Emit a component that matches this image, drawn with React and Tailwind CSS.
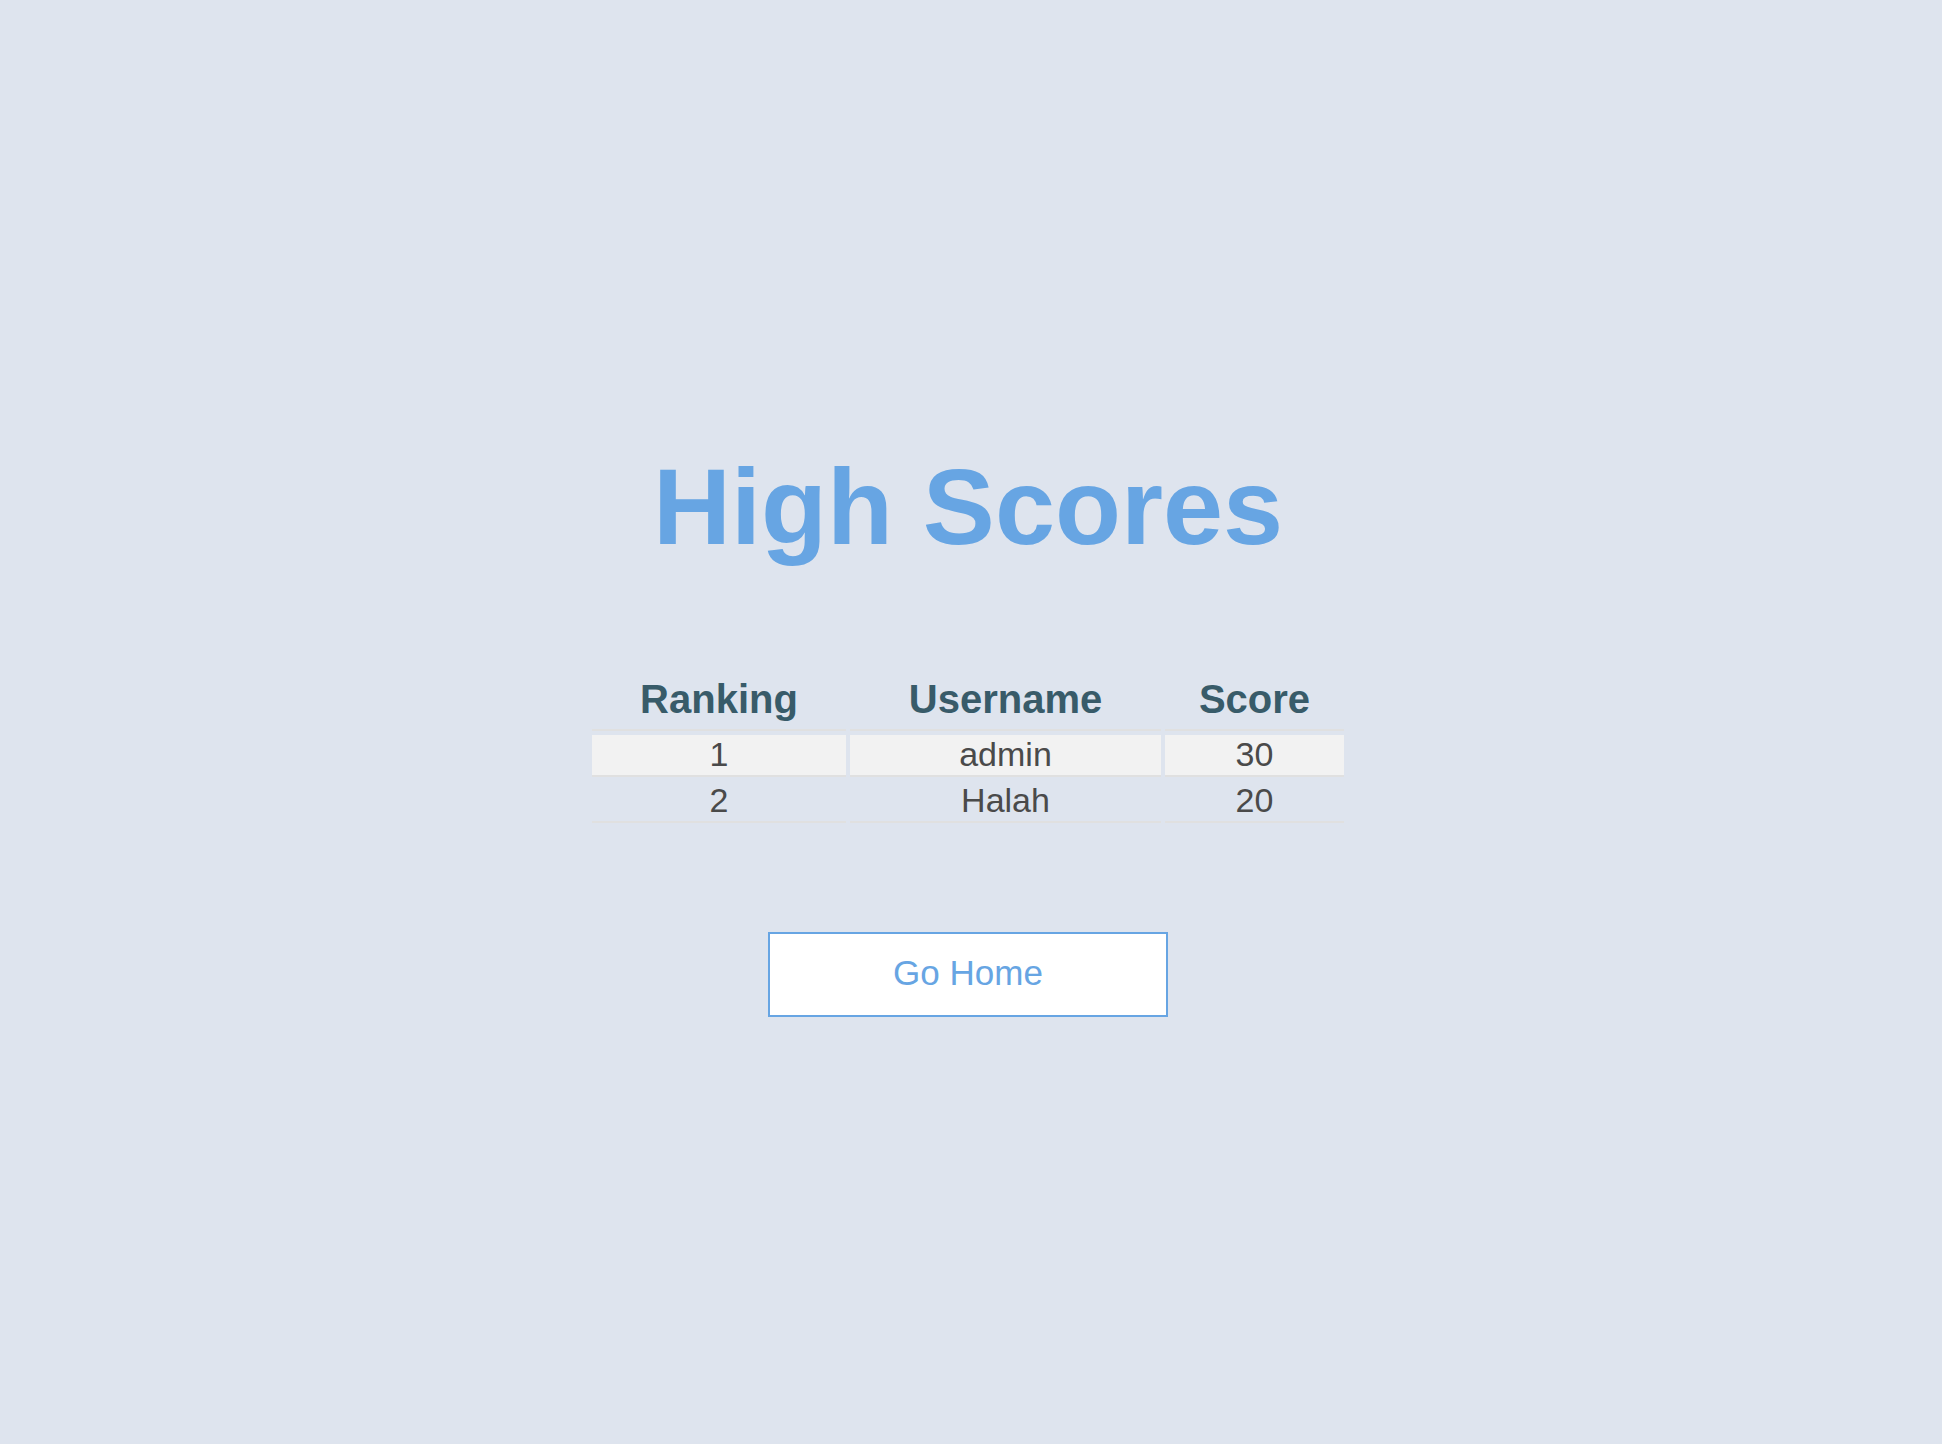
import React from "react";

const rows = [
  { rank: 1, user: "admin", score: 30 },
  { rank: 2, user: "Halah", score: 20 },
];

export default function App() {
  return (
    <div
      className="min-h-screen w-full bg-[#dee4ee] flex flex-col items-center pt-[453px] pr-[6px]"
      style={{ fontFamily: '"Liberation Sans", Arial, Helvetica, sans-serif' }}
    >
      <h1 className="text-[108px] leading-none font-bold text-[#67a5e3] m-0">High Scores</h1>

      <table className="mt-[111px] w-[760px] table-fixed border-separate border-spacing-[4px]">
        <thead>
          <tr>
            <th className="w-[254px] text-[40px] leading-[46px] font-bold text-[#385b69] pb-[7px] border-b-2 border-[#e0e0e0] text-center">
              Ranking
            </th>
            <th className="w-[311px] text-[40px] leading-[46px] font-bold text-[#385b69] pb-[7px] border-b-2 border-[#e0e0e0] text-center">
              Username
            </th>
            <th className="w-[179px] text-[40px] leading-[46px] font-bold text-[#385b69] pb-[7px] border-b-2 border-[#e0e0e0] text-center">
              Score
            </th>
          </tr>
        </thead>
        <tbody>
          {rows.map((r, i) => (
            <tr key={r.rank}>
              <td className={`text-[34px] leading-[38px] pb-[2px] text-[#4a4a4a] text-center border-b-2 border-[#e0e0e0] ${i % 2 === 0 ? "bg-[#f2f2f2]" : ""}`}>
                {r.rank}
              </td>
              <td className={`text-[34px] leading-[38px] pb-[2px] text-[#4a4a4a] text-center border-b-2 border-[#e0e0e0] ${i % 2 === 0 ? "bg-[#f2f2f2]" : ""}`}>
                {r.user}
              </td>
              <td className={`text-[34px] leading-[38px] pb-[2px] text-[#4a4a4a] text-center border-b-2 border-[#e0e0e0] ${i % 2 === 0 ? "bg-[#f2f2f2]" : ""}`}>
                {r.score}
              </td>
            </tr>
          ))}
        </tbody>
      </table>

      <button className="mt-[105px] w-[400px] h-[85px] border-2 border-[#67a5e3] bg-white text-[#67a5e3] text-[35px] leading-none flex items-center justify-center pb-[5px]">
        Go Home
      </button>
    </div>
  );
}
